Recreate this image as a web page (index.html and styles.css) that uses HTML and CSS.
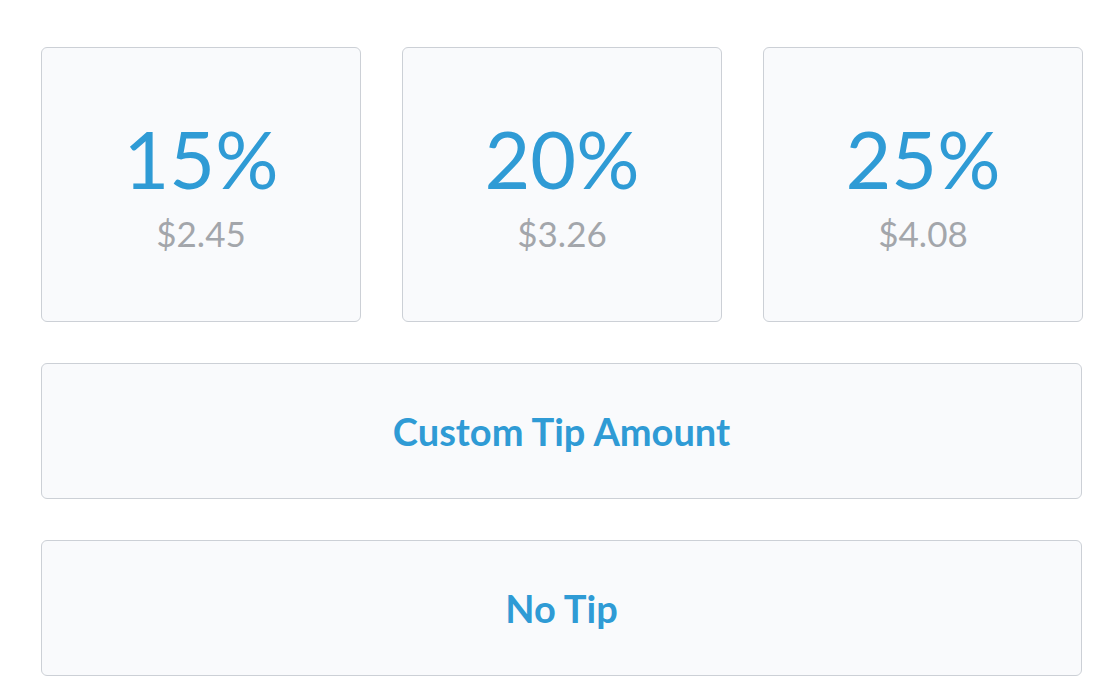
FILE: index.html
```html
<!DOCTYPE html>
<html>
<head>
<meta charset="utf-8">
<link rel="stylesheet" href="styles.css">
</head>
<body>
<div class="tips">
  <div class="row">
    <div class="card"><div class="pct">15%</div><div class="amt">$2.45</div></div>
    <div class="card"><div class="pct">20%</div><div class="amt">$3.26</div></div>
    <div class="card"><div class="pct">25%</div><div class="amt">$4.08</div></div>
  </div>
  <div class="btn">Custom Tip Amount</div>
  <div class="btn">No Tip</div>
</div>
</body>
</html>
```
FILE: styles.css
```css
html, body {
  margin: 0;
  padding: 0;
  background: #ffffff;
}
body {
  font-family: "Lato", "Open Sans", sans-serif;
}
.tips {
  width: 1042px;
  margin-left: 41px;
  padding-top: 47px;
  display: flex;
  flex-direction: column;
  gap: 41px;
}
.row {
  display: flex;
  gap: 41px;
}
.card {
  box-sizing: border-box;
  width: 320px;
  height: 275px;
  background: #f9fafc;
  border: 1.5px solid #ccd0d6;
  border-radius: 6px;
  display: flex;
  flex-direction: column;
  align-items: center;
  justify-content: center;
}
.pct {
  color: #2f9bd5;
  font-size: 79px;
  line-height: 79px;
  font-weight: 400;
}
.amt {
  color: #a3a6ab;
  font-size: 35px;
  line-height: 35px;
  margin-top: 18px;
}
.btn {
  box-sizing: border-box;
  width: 1041px;
  height: 136px;
  background: #f9fafc;
  border: 1.5px solid #ccd0d6;
  border-radius: 6px;
  display: flex;
  align-items: center;
  justify-content: center;
  color: #2f9bd5;
  font-size: 38px;
  font-weight: 700;
}
```
